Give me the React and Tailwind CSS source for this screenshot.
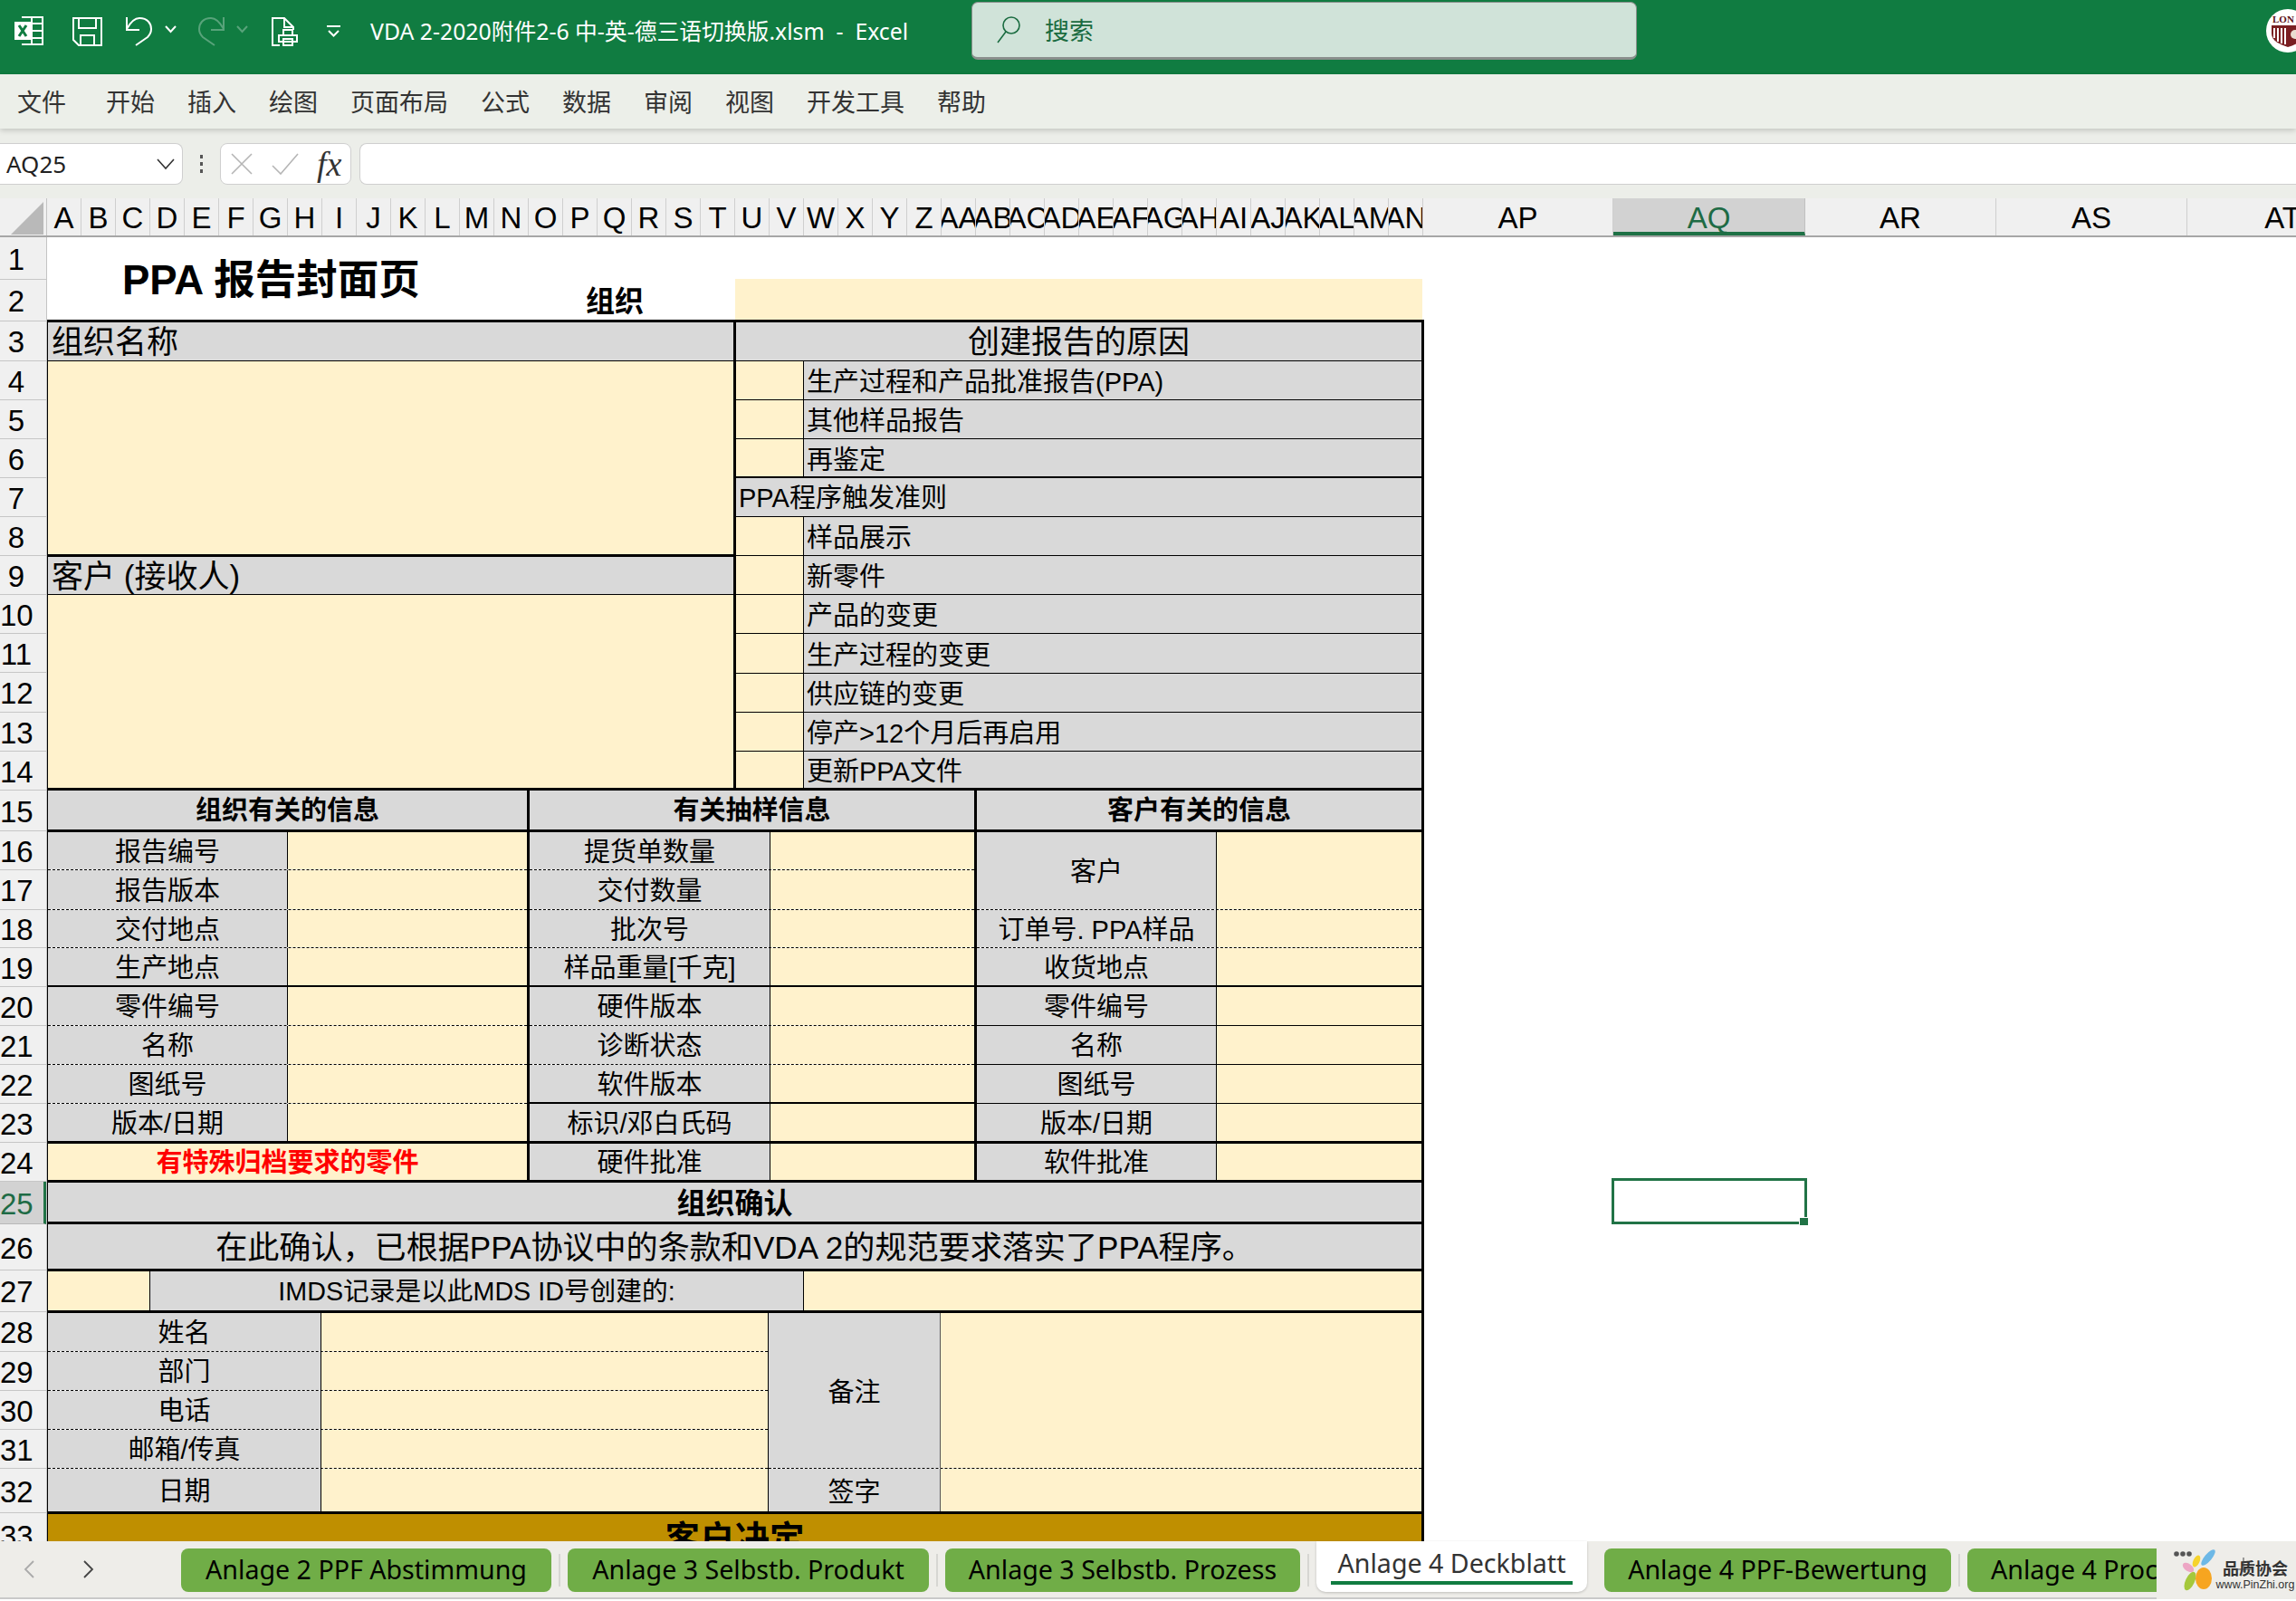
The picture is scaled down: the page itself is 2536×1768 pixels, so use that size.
const rowHeaders = [
  { n: 1, h: "h-[47px]" }, { n: 2, h: "h-[46px]" }, { n: 3, h: "h-[44px]" }, { n: 4, h: "h-[43px]" },
  { n: 5, h: "h-[43px]" }, { n: 6, h: "h-[43px]" }, { n: 7, h: "h-[43px]" }, { n: 8, h: "h-[43px]" },
  { n: 9, h: "h-[43px]" }, { n: 10, h: "h-[43px]" }, { n: 11, h: "h-[43px]" }, { n: 12, h: "h-[44px]" },
  { n: 13, h: "h-[43px]" }, { n: 14, h: "h-[43px]" }, { n: 15, h: "h-[45px]" }, { n: 16, h: "h-[43px]" },
  { n: 17, h: "h-[44px]" }, { n: 18, h: "h-[42px]" }, { n: 19, h: "h-[43px]" }, { n: 20, h: "h-[43px]" },
  { n: 21, h: "h-[43px]" }, { n: 22, h: "h-[43px]" }, { n: 23, h: "h-[43px]" }, { n: 24, h: "h-[43px]" },
  { n: 25, h: "h-[47px]" }, { n: 26, h: "h-[51px]" }, { n: 27, h: "h-[46px]" }, { n: 28, h: "h-[44px]" },
  { n: 29, h: "h-[43px]" }, { n: 30, h: "h-[43px]" }, { n: 31, h: "h-[43px]" }, { n: 32, h: "h-[49px]" },
  { n: 33, h: "h-[50px]" },
];

const narrowCols = "A B C D E F G H I J K L M N O P Q R S T U V W X Y Z AA AB AC AD AE AF AG AH AI AJ AK AL AM AN".split(" ");
const wideCols = ["AP", "AQ", "AR", "AS", "AT"];
const ribbonTabs = ["开始", "插入", "绘图", "页面布局", "公式", "数据", "审阅", "视图", "开发工具", "帮助"];

const DASH = "border-b border-dashed border-black";
const THIN = "border-b border-black";
const MID = "border-b-2 border-black";
const THICK = "border-b-[3px] border-black";

const col1Rows = [
  { label: "报告编号", h: "h-[42px]", line: DASH },
  { label: "报告版本", h: "h-[44px]", line: DASH },
  { label: "交付地点", h: "h-[42px]", line: DASH },
  { label: "生产地点", h: "h-[43px]", line: MID },
  { label: "零件编号", h: "h-[43px]", line: DASH },
  { label: "名称", h: "h-[43px]", line: DASH },
  { label: "图纸号", h: "h-[43px]", line: DASH },
  { label: "版本/日期", h: "h-[44px]", line: THICK },
];

const col2Rows = [
  { label: "提货单数量", h: "h-[42px]", line: DASH },
  { label: "交付数量", h: "h-[44px]", line: DASH },
  { label: "批次号", h: "h-[42px]", line: DASH },
  { label: "样品重量[千克]", h: "h-[43px]", line: MID },
  { label: "硬件版本", h: "h-[43px]", line: DASH },
  { label: "诊断状态", h: "h-[43px]", line: DASH },
  { label: "软件版本", h: "h-[43px]", line: MID },
  { label: "标识/邓白氏码", h: "h-[44px]", line: THICK },
  { label: "硬件批准", h: "h-[43px]", line: THICK },
];

const col3Rows = [
  { label: "客户", h: "h-[86px]", line: DASH },
  { label: "订单号. PPA样品", h: "h-[42px]", line: DASH },
  { label: "收货地点", h: "h-[43px]", line: MID },
  { label: "零件编号", h: "h-[43px]", line: THIN },
  { label: "名称", h: "h-[43px]", line: THIN },
  { label: "图纸号", h: "h-[43px]", line: THIN },
  { label: "版本/日期", h: "h-[44px]", line: THICK },
  { label: "软件批准", h: "h-[43px]", line: THICK },
];

const personRows = [
  { label: "姓名", h: "h-[43px]", line: DASH },
  { label: "部门", h: "h-[43px]", line: DASH },
  { label: "电话", h: "h-[43px]", line: DASH },
  { label: "邮箱/传真", h: "h-[43px]", line: DASH },
  { label: "日期", h: "h-[50px]", line: THICK },
];

const reasonRows = [
  { label: "生产过程和产品批准报告(PPA)", h: "h-[43px]", line: THIN },
  { label: "其他样品报告", h: "h-[43px]", line: THIN },
  { label: "再鉴定", h: "h-[43px]", line: MID },
];

const triggerRows = [
  { label: "样品展示", h: "h-[43px]", line: THIN },
  { label: "新零件", h: "h-[43px]", line: THIN },
  { label: "产品的变更", h: "h-[43px]", line: THIN },
  { label: "生产过程的变更", h: "h-[44px]", line: THIN },
  { label: "供应链的变更", h: "h-[43px]", line: THIN },
  { label: "停产>12个月后再启用", h: "h-[43px]", line: THIN },
  { label: "更新PPA文件", h: "h-[40px]", line: "" },
];

function ExcelIcon() {
  return (
    <svg width="32" height="32" viewBox="0 0 32 32" fill="none" stroke="white" strokeWidth="2" className="shrink-0">
      <path d="M8 1h23v30H8M19 1v30M19 8h12M19 16h12M19 24h12" />
      <rect x="0" y="6" width="18" height="20" fill="white" stroke="none" />
      <path d="M5 10l8 12M13 10l-8 12" stroke="#107c41" strokeWidth="3" />
    </svg>
  );
}

function SaveIcon() {
  return (
    <svg width="33" height="32" viewBox="0 0 33 32" fill="none" stroke="white" strokeWidth="2" className="shrink-0">
      <path d="M1 1h31v30H7l-6-6z" />
      <path d="M7 1v11h19V1M9 31V20h15v11" />
    </svg>
  );
}

function UndoIcon({ dim }) {
  return (
    <svg width="30" height="34" viewBox="0 0 30 34" fill="none" stroke="white" strokeWidth="2" className={dim ? "shrink-0 opacity-30 -scale-x-100" : "shrink-0"}>
      <path d="M1 1v14h14M1 14C6 5 10 2 15 2c9 0 13 6 13 12 0 4-2 7-4 9L11 32" />
    </svg>
  );
}

function Chevron({ dim }) {
  return (
    <svg width="13" height="9" viewBox="0 0 13 9" fill="none" stroke="white" strokeWidth="2" className={dim ? "shrink-0 opacity-30" : "shrink-0"}>
      <path d="M1 1l5.5 6L12 1" />
    </svg>
  );
}

function PrintIcon() {
  return (
    <svg width="29" height="32" viewBox="0 0 29 32" fill="none" stroke="white" strokeWidth="2" className="shrink-0">
      <path d="M9 31H1V1h13l10 10v3M14 1v10h10" />
      <path d="M13 14h10v6H13zM8 20h20v7H8zM13 24h10v7H13z" fill="#107c41" />
    </svg>
  );
}

function CustomizeIcon() {
  return (
    <svg width="16" height="13" viewBox="0 0 16 13" fill="none" stroke="white" strokeWidth="2" className="shrink-0">
      <path d="M0 1h15M2 6l5.5 5.5L13 6" />
    </svg>
  );
}

function SearchIcon() {
  return (
    <svg width="26" height="30" viewBox="0 0 26 30" fill="none" stroke="#1a6b40" strokeWidth="1.6" className="shrink-0">
      <circle cx="16" cy="10" r="9" />
      <path d="M10 17L1 29" />
    </svg>
  );
}

function Avatar() {
  return (
    <div className="absolute left-[2503px] top-[10px] flex h-[48px] w-[48px] items-center justify-center overflow-hidden rounded-full bg-white">
      <svg width="40" height="40" viewBox="0 0 40 40">
        <path d="M2 3h36v20c0 8-9 12-18 15C11 35 2 31 2 23z" fill="#7a1f22" />
        <path d="M2 3h36v11H2z" fill="#fff" />
        <path d="M5 17v11M9 17v15M13 17v17M17 17v18" stroke="#fff" strokeWidth="2" />
        <text x="3" y="11" fontSize="11" fontWeight="700" fill="#5c1215" className="[font-family:'Liberation_Serif',serif]">LON</text>
        <circle cx="28" cy="24" r="5" fill="#e9dcd0" />
      </svg>
    </div>
  );
}

function RowHeader() {
  return (
    <div className="w-[52px] shrink-0 border-r border-[#c4c4c4]">
      {rowHeaders.map((row) =>
        row.n === 25 ? (
          <div key={row.n} className={`flex ${row.h} items-center border-b border-r-[3px] border-b-[#b8b8b8] border-r-[#217346] bg-[#d2d2d2] pt-[3px]`}>
            <span className="w-[36px] text-center text-[#1e6b45]">{row.n}</span>
          </div>
        ) : (
          <div key={row.n} className={`flex ${row.h} items-center border-b border-[#c6c6c6] bg-[#f0f0f0] pt-[3px]`}>
            <span className="w-[36px] text-center text-black">{row.n}</span>
          </div>
        )
      )}
    </div>
  );
}

function ColumnHeader() {
  return (
    <div className="flex h-[43px] overflow-hidden border-b-2 border-[#a6a6a6] bg-[#f0f0f0]">
      <div className="flex w-[52px] shrink-0 items-end border-r border-[#c4c4c4] pb-[1px] pl-[12px]">
        <div className="h-0 w-0 border-b-[36px] border-l-[36px] border-b-[#b9b9b9] border-l-transparent" />
      </div>
      {narrowCols.map((name) => (
        <div key={name} className="flex w-[38px] shrink-0 justify-center overflow-hidden border-r border-[#cfcfcf] pt-[2px] leading-[40px]">
          <span className="shrink-0">{name}</span>
        </div>
      ))}
      {wideCols.map((name) =>
        name === "AQ" ? (
          <div key={name} className="flex w-[212px] shrink-0 justify-center border-b-[4px] border-r border-[#1e7145] border-r-[#c0c0c0] bg-[#d2d2d2] pt-[2px] leading-[40px] text-[#1e6b45]">
            {name}
          </div>
        ) : (
          <div key={name} className={`flex ${name === "AP" ? "w-[210px]" : "w-[211px]"} shrink-0 justify-center border-r border-[#cfcfcf] pt-[2px] leading-[40px]`}>
            {name}
          </div>
        )
      )}
    </div>
  );
}

function Field({ className }) {
  return <div className={`bg-[#fff2cc] ${className}`} />;
}

function InfoColumn({ rows, width, labelWidth }) {
  return (
    <div className={width}>
      {rows.map((row) => (
        <div key={row.label + row.h} className={`flex ${row.h} ${row.line}`}>
          <div className={`flex ${labelWidth} items-center justify-center border-r border-black bg-[#d9d9d9] pt-[4px]`}>{row.label}</div>
          <Field className="flex-1" />
        </div>
      ))}
    </div>
  );
}

function TickRow({ row }) {
  return (
    <div className={`flex ${row.h} ${row.line}`}>
      <Field className="w-[75px] border-r border-black" />
      <div className="flex flex-1 items-center bg-[#d9d9d9] pt-[6px] pl-[3px]">{row.label}</div>
    </div>
  );
}

function Sheet() {
  return (
    <div className="flex h-[1440px] overflow-hidden bg-white text-[33px] text-black">
      <RowHeader />
      <div className="w-[1521px] shrink-0 text-[29px]">
        <div className="flex h-[94px] border-b-[3px] border-black">
          <div className="flex w-[760px] shrink-0">
            <div className="mt-[23px] ml-[83px] w-[512px] text-[45.5px] font-bold leading-[50px]">PPA 报告封面页</div>
            <div className="mt-[53px] text-[32px] font-bold leading-[36px]">组织</div>
          </div>
          <Field className="mt-[46px] w-[759px]" />
        </div>

        <div className="border-l border-r-[3px] border-black">
          <div className="flex h-[517px] border-b-[3px] border-black">
            <div className="flex w-[760px] shrink-0 flex-col border-r-[3px] border-black">
              <div className="flex h-[43px] items-center border-b border-black bg-[#d9d9d9] pt-[3px] pl-[4px] text-[35px]">组织名称</div>
              <Field className="h-[216px] border-b-[3px] border-black" />
              <div className="flex h-[42px] items-center border-b border-black bg-[#d9d9d9] pt-[3px] pl-[4px] text-[35px]">客户 (接收人)</div>
              <Field className="flex-1" />
            </div>
            <div className="flex-1">
              <div className="flex h-[43px] items-center justify-center border-b border-black bg-[#d9d9d9] pt-[3px] text-[35px]">创建报告的原因</div>
              {reasonRows.map((row) => (
                <TickRow key={row.label} row={row} />
              ))}
              <div className="flex h-[43px] items-center border-b border-black bg-[#d9d9d9] pt-[4px] pl-[3px]">PPA程序触发准则</div>
              {triggerRows.map((row) => (
                <TickRow key={row.label} row={row} />
              ))}
            </div>
          </div>

          <div className="flex h-[46px] border-b-[3px] border-black bg-[#d9d9d9] pt-[3px] font-bold">
            <div className="-mt-[3px] flex w-[532px] shrink-0 items-center justify-center border-r-[3px] border-black pt-[3px]">组织有关的信息</div>
            <div className="-mt-[3px] flex w-[494px] shrink-0 items-center justify-center border-r-[3px] border-black pt-[3px]">有关抽样信息</div>
            <div className="flex flex-1 items-center justify-center">客户有关的信息</div>
          </div>

          <div className="flex h-[387px]">
            <div className="w-[532px] shrink-0 border-r-[3px] border-black">
              {col1Rows.map((row) => (
                <div key={row.label} className={`flex ${row.h} ${row.line}`}>
                  <div className="flex w-[265px] items-center justify-center border-r border-black bg-[#d9d9d9] pt-[4px]">{row.label}</div>
                  <Field className="flex-1" />
                </div>
              ))}
              <div className="flex h-[43px] items-center justify-center border-b-[3px] border-black bg-[#fff2cc] pt-[3px] font-bold text-[#ff0000]">有特殊归档要求的零件</div>
            </div>
            <InfoColumn rows={col2Rows} width="w-[494px] shrink-0 border-r-[3px] border-black" labelWidth="w-[266px]" />
            <InfoColumn rows={col3Rows} width="flex-1" labelWidth="w-[265px]" />
          </div>

          <div className="flex h-[46px] items-center justify-center border-b-[3px] border-black bg-[#d9d9d9] pt-[3px] text-[32px] font-bold">组织确认</div>
          <div className="flex h-[52px] items-center justify-center border-b-[3px] border-black bg-[#d9d9d9] pt-[3px] text-[35.1px]">在此确认，已根据PPA协议中的条款和VDA 2的规范要求落实了PPA程序。</div>

          <div className="flex h-[46px] border-b-[3px] border-black">
            <Field className="w-[113px] border-r border-black" />
            <div className="flex w-[722px] items-center justify-center border-r border-black bg-[#d9d9d9] pt-[3px] text-[28.7px]">IMDS记录是以此MDS ID号创建的:</div>
            <Field className="flex-1" />
          </div>

          <div className="flex h-[222px]">
            <div className="w-[796px] shrink-0 border-r border-black">
              {personRows.map((row) => (
                <div key={row.label} className={`flex ${row.h} ${row.line}`}>
                  <div className="flex w-[302px] items-center justify-center border-r border-black bg-[#d9d9d9] pt-[4px]">{row.label}</div>
                  <Field className="flex-1" />
                </div>
              ))}
            </div>
            <div className="flex flex-1 flex-col">
              <div className="flex h-[172px] border-b border-dashed border-black">
                <div className="flex w-[190px] items-center justify-center border-r border-[#555] bg-[#d9d9d9] pt-[6px]">备注</div>
                <Field className="flex-1" />
              </div>
              <div className="flex h-[50px] border-b-[3px] border-black">
                <div className="flex w-[190px] items-center justify-center border-r border-[#555] bg-[#d9d9d9] pt-[6px]">签字</div>
                <Field className="flex-1" />
              </div>
            </div>
          </div>

          <div className="flex h-[54px] items-center justify-center bg-[#bf8f00] pt-[2px] text-[38.5px] font-bold">客户决定</div>
        </div>
      </div>
    </div>
  );
}

function SheetTab({ label, width }) {
  return (
    <div className="flex items-center">
      <div className={`flex h-[48px] ${width} shrink-0 items-center justify-center overflow-hidden rounded-[8px] bg-[#70ad47] pb-[2px] text-black`}>
        <span className="shrink-0">{label}</span>
      </div>
      <div className="mx-[8px] h-[36px] w-[2px] bg-[#d6d6d2]" />
    </div>
  );
}

function WatermarkLogo() {
  return (
    <div className="absolute left-[2382px] top-[1702px] flex h-[64px] w-[154px] items-end bg-[#eeede9] pb-[9px]">
      <svg width="66" height="48" viewBox="0 0 66 48" className="shrink-0">
        <circle cx="22" cy="7" r="2.8" fill="#555" />
        <circle cx="29" cy="7" r="2.8" fill="#555" />
        <circle cx="36" cy="7" r="2.8" fill="#555" />
        <ellipse cx="57" cy="11" rx="4" ry="11" transform="rotate(40 57 11)" fill="#6db8e6" />
        <ellipse cx="44" cy="15" rx="3.5" ry="7" transform="rotate(25 44 15)" fill="#f6d32d" />
        <ellipse cx="35" cy="22" rx="4" ry="7" transform="rotate(-55 35 22)" fill="#eda6c4" />
        <ellipse cx="37" cy="37" rx="5" ry="11" transform="rotate(25 37 37)" fill="#a5c83c" />
        <ellipse cx="52" cy="34" rx="9" ry="12" fill="#f7a520" />
      </svg>
      <div className="ml-[1px] flex w-[84px] flex-col items-center [font-family:'Liberation_Sans','Noto_Sans_CJK_SC',sans-serif] text-[#333]">
        <span className="text-[18px] leading-[20px] font-bold">品质协会</span>
        <span className="text-[12.5px] leading-[14px]">www.PinZhi.org</span>
      </div>
      <svg width="22" height="16" viewBox="0 0 22 16" fill="none" stroke="#444" className="absolute top-[18px] left-[85px]">
        <path d="M11 0v16M1 13h20" />
      </svg>
    </div>
  );
}

export default function App() {
  return (
    <div className="relative h-[1768px] w-[2536px] overflow-hidden bg-white [font-family:'Liberation_Sans','Noto_Sans_CJK_SC',sans-serif]">
      <div className="relative flex h-[82px] items-start bg-[#107c41] text-white">
        <div className="mt-[18px] ml-[16px]"><ExcelIcon /></div>
        <div className="mt-[19px] ml-[32px]"><SaveIcon /></div>
        <div className="mt-[18px] ml-[26px]"><UndoIcon /></div>
        <div className="mt-[28px] ml-[13px]"><Chevron /></div>
        <div className="mt-[18px] ml-[23px]"><UndoIcon dim /></div>
        <div className="mt-[28px] ml-[13px]"><Chevron dim /></div>
        <div className="mt-[19px] ml-[26px]"><PrintIcon /></div>
        <div className="mt-[28px] ml-[32px]"><CustomizeIcon /></div>
        <div className="mt-[14px] ml-[32px] w-[640px] whitespace-pre text-[24.8px] leading-[40px] [font-family:'Noto_Sans','Noto_Sans_CJK_SC',sans-serif]">VDA 2-2020附件2-6 中-英-德三语切换版.xlsm  -  Excel</div>
        <div className="mt-[2px] ml-[24px] flex h-[64px] w-[735px] items-center rounded-[7px] border border-b-[3px] border-[#8a8f8c] bg-[#d0e3d9] pl-[27px]">
          <SearchIcon />
          <span className="ml-[27px] text-[27px] text-[#1a6b40] [font-family:'Noto_Sans_CJK_SC',sans-serif]">搜索</span>
        </div>
        <Avatar />
      </div>

      <div className="relative z-10 flex h-[60px] items-center gap-[36px] bg-[#ecefe9] pl-[19px] text-[27px] text-[#333] shadow-[0_2px_6px_rgba(0,0,0,0.18)] [font-family:'Noto_Sans_CJK_SC',sans-serif]">
        <span className="mr-[8px]">文件</span>
        {ribbonTabs.map((tab) => (
          <span key={tab}>{tab}</span>
        ))}
      </div>

      <div className="flex h-[77px] items-start bg-[#eceee9] pt-[16px]">
        <div className="flex h-[46px] w-[202px] items-center justify-between rounded-r-[8px] border border-l-0 border-[#cfcfcf] bg-white pr-[8px] pl-[7px] text-[26px] text-[#222] [font-family:'Noto_Sans',sans-serif]">
          AQ25
          <svg width="20" height="14" viewBox="0 0 20 14" fill="none" stroke="#333" strokeWidth="1.6">
            <path d="M1 2l9 10 9-10" />
          </svg>
        </div>
        <div className="flex h-[46px] w-[41px] flex-col items-center justify-center gap-[4px]">
          <span className="h-[4px] w-[3px] bg-[#555]" />
          <span className="h-[4px] w-[3px] bg-[#555]" />
          <span className="h-[4px] w-[3px] bg-[#555]" />
        </div>
        <div className="flex h-[46px] w-[145px] items-center rounded-[8px] border border-[#cfcfcf] bg-white pl-[11px]">
          <svg width="24" height="24" viewBox="0 0 24 24" fill="none" stroke="#b5b5b5" strokeWidth="1.6" className="shrink-0">
            <path d="M1 1l22 22M23 1L1 23" />
          </svg>
          <svg width="30" height="24" viewBox="0 0 30 24" fill="none" stroke="#b5b5b5" strokeWidth="1.6" className="ml-[21px] shrink-0">
            <path d="M1 14l9 9L29 1" />
          </svg>
          <span className="ml-[20px] text-[38px] leading-none text-[#333] italic [font-family:'Liberation_Serif',serif]">fx</span>
        </div>
        <div className="ml-[9px] h-[46px] flex-1 rounded-l-[8px] border border-r-0 border-[#cfcfcf] bg-white" />
      </div>

      <div className="text-[33px] text-black">
        <ColumnHeader />
      </div>
      <Sheet />

      <div className="flex h-[64px] items-start border-b-2 border-[#c9c9c9] bg-[#eeede9] text-[28.6px] [font-family:'Noto_Sans',sans-serif]">
        <svg width="12" height="20" viewBox="0 0 12 20" fill="none" stroke="#aaa" strokeWidth="1.8" className="mt-[21px] ml-[26px]">
          <path d="M11 1L2 10l9 9" />
        </svg>
        <svg width="12" height="20" viewBox="0 0 12 20" fill="none" stroke="#444" strokeWidth="1.8" className="mt-[21px] ml-[54px]">
          <path d="M1 1l9 9-9 9" />
        </svg>
        <div className="ml-[96px] flex h-[64px] items-start pt-[8px]">
          <SheetTab label="Anlage 2 PPF Abstimmung" width="w-[409px]" />
          <SheetTab label="Anlage 3 Selbstb. Produkt" width="w-[399px]" />
          <SheetTab label="Anlage 3 Selbstb. Prozess" width="w-[392px]" />
          <div className="-mt-[8px] mr-[19px] flex h-[56px] w-[299px] shrink-0 flex-col items-center rounded-b-[10px] bg-white shadow-[0_1px_3px_rgba(0,0,0,0.2)]">
            <span className="mt-[4px] leading-[40px] text-[#333]">Anlage 4 Deckblatt</span>
            <span className="h-[4px] w-[267px] bg-[#107c41]" />
          </div>
          <SheetTab label="Anlage 4 PPF-Bewertung" width="w-[383px]" />
          <div className="flex h-[48px] w-[209px] shrink-0 items-center justify-start overflow-hidden rounded-l-[8px] bg-[#70ad47] pb-[2px] pl-[26px] whitespace-nowrap text-black">Anlage 4 Process</div>
        </div>
      </div>

      <WatermarkLogo />

      <div className="absolute top-[1301px] left-[1780px] h-[51px] w-[216px] border-[3px] border-[#217346]">
        <div className="absolute -right-[4px] -bottom-[4px] h-[9px] w-[10px] border-t border-l border-white bg-[#217346]" />
      </div>
    </div>
  );
}
